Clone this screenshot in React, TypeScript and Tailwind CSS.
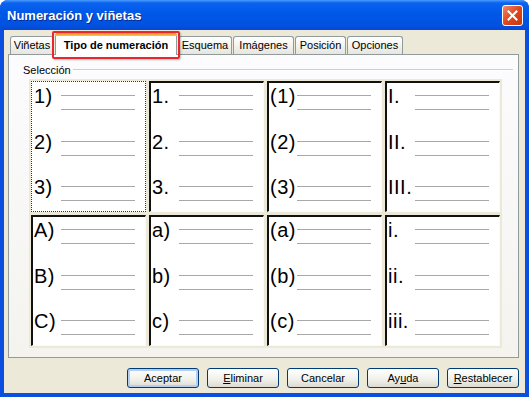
import React from "react";

const sets = [
  ["1)", "2)", "3)"],
  ["1.", "2.", "3."],
  ["(1)", "(2)", "(3)"],
  ["I.", "II.", "III."],
  ["A)", "B)", "C)"],
  ["a)", "b)", "c)"],
  ["(a)", "(b)", "(c)"],
  ["i.", "ii.", "iii."],
];

const tabs = [
  { label: "Viñetas", w: "w-[44px]" },
  { label: "Tipo de numeración", w: "w-[122px]", active: true },
  { label: "Esquema", w: "w-[54px]" },
  { label: "Imágenes", w: "w-[61px]" },
  { label: "Posición", w: "w-[51px]" },
  { label: "Opciones", w: "w-[56px]" },
];

function Cell({ items, selected }: { items: string[]; selected?: boolean }) {
  return (
    <div
      className={
        selected
          ? "h-[131px] w-[115px] border border-dotted border-[#333] bg-white pl-[2px] pt-[2px]"
          : "h-[131px] w-[115px] border-b border-l-2 border-r border-t-2 border-b-[#fbfaf6] border-l-[#111] border-r-[#fbfaf6] border-t-[#111] bg-white pl-[1px] pt-[1px]"
      }
    >
      <div className="flex flex-col gap-[19.5px]">
        {items.map((n) => (
          <div key={n} className="flex items-start">
            <span className="w-[27px] shrink-0 whitespace-nowrap text-[20px] leading-[24px] tracking-[0.5px] text-black">{n}</span>
            <div className="flex w-[74px] flex-col gap-[13px] pt-[11px]">
              <div className="h-px bg-[#a8a8a8]" />
              <div className="h-px bg-[#a8a8a8]" />
            </div>
          </div>
        ))}
      </div>
    </div>
  );
}

function Button({ children, primary }: { children: React.ReactNode; primary?: boolean }) {
  return (
    <button
      className={
        "h-[20px] w-[72px] rounded-[3px] border border-[#003c74] bg-[linear-gradient(to_bottom,#ffffff,#f0f0ea_60%,#dcdad0)] text-[11px] leading-none text-black " +
        (primary ? "shadow-[inset_0_0_0_2px_#b4cdf2]" : "")
      }
    >
      {children}
    </button>
  );
}

export default function App() {
  return (
    <div className="relative flex h-[397px] w-[529px] flex-col overflow-hidden rounded-t-[8px] bg-[#0a4fe0] font-['Liberation_Sans',Arial,sans-serif]">
      <div className="flex h-[30px] shrink-0 items-center justify-between bg-[linear-gradient(to_bottom,#4a9bff_0%,#0a62ee_10%,#0058e8_45%,#0052df_85%,#0846d2_100%)] pl-[7px] pr-[6px] pt-[1px]">
        <span className="text-[13px] font-bold text-white [text-shadow:1px_1px_0_#0a2a8a]">Numeración y viñetas</span>
        <div className="flex h-[21px] w-[21px] items-center justify-center rounded-[3px] border border-white bg-[linear-gradient(135deg,#f08a6a,#e0461c_50%,#c4380f)]">
          <svg width="11" height="11" viewBox="0 0 11 11">
            <path d="M1.5 1.5 L9.5 9.5 M9.5 1.5 L1.5 9.5" stroke="white" strokeWidth="2" strokeLinecap="square" />
          </svg>
        </div>
      </div>

      <div className="mx-[4px] mb-[4px] flex flex-1 flex-col bg-[#ece9d8] pl-[4px] pr-[6px] pt-[3px]">
        <div className="ml-[2px] flex h-[21px] items-end gap-[1px]">
          {tabs.map((t) =>
            t.active ? (
              <div
                key={t.label}
                className={`${t.w} relative z-10 -mb-px flex h-[22px] items-center justify-center rounded-t-[3px] border-x border-[#919b9c] bg-white text-[11px] font-bold text-black`}
              >
                <div className="absolute inset-x-[-1px] top-0 h-[3px] rounded-t-[3px] bg-[linear-gradient(to_bottom,#e68b2c,#ffc73c)]" />
                <span className="pt-[2px]">{t.label}</span>
              </div>
            ) : (
              <div
                key={t.label}
                className={`${t.w} flex h-[18px] items-center justify-center rounded-t-[3px] border-x border-t border-[#919b9c] bg-[linear-gradient(to_bottom,#ffffff,#f3f3ef_50%,#e6e5de)] text-[11px] text-black`}
              >
                {t.label}
              </div>
            )
          )}
        </div>

        <div className="h-[304px] w-[511px] border border-[#919b9c] bg-[linear-gradient(to_bottom,#fcfcfe,#f4f3ee)] pl-[14px] pt-[8px]">
          <div className="flex h-[14px] items-center">
            <span className="text-[11px] text-black">Selección</span>
            <div className="ml-[2px] h-[2px] w-[440px] border-b border-t border-b-white border-t-[#d0d0bf]" />
          </div>
          <div className="ml-[6px] mt-[2px] grid w-[473px] grid-cols-4 gap-[3px] bg-[#ece9d8] p-[2px]">
            {sets.map((s, i) => (
              <Cell key={i} items={s} selected={i === 0} />
            ))}
          </div>
        </div>

        <div className="mt-[10px] flex justify-end gap-[8px]">
          <Button primary>Aceptar</Button>
          <Button>
            <span className="underline">E</span>liminar
          </Button>
          <Button>Cancelar</Button>
          <Button>
            Ay<span className="underline">u</span>da
          </Button>
          <Button>
            <span className="underline">R</span>establecer
          </Button>
        </div>
      </div>

      <div className="pointer-events-none absolute left-[52px] top-[31px] h-[28px] w-[128px] rounded-[2px] border-2 border-[#e8262c] shadow-[1px_1px_2px_rgba(0,0,0,0.25)]" />
    </div>
  );
}
